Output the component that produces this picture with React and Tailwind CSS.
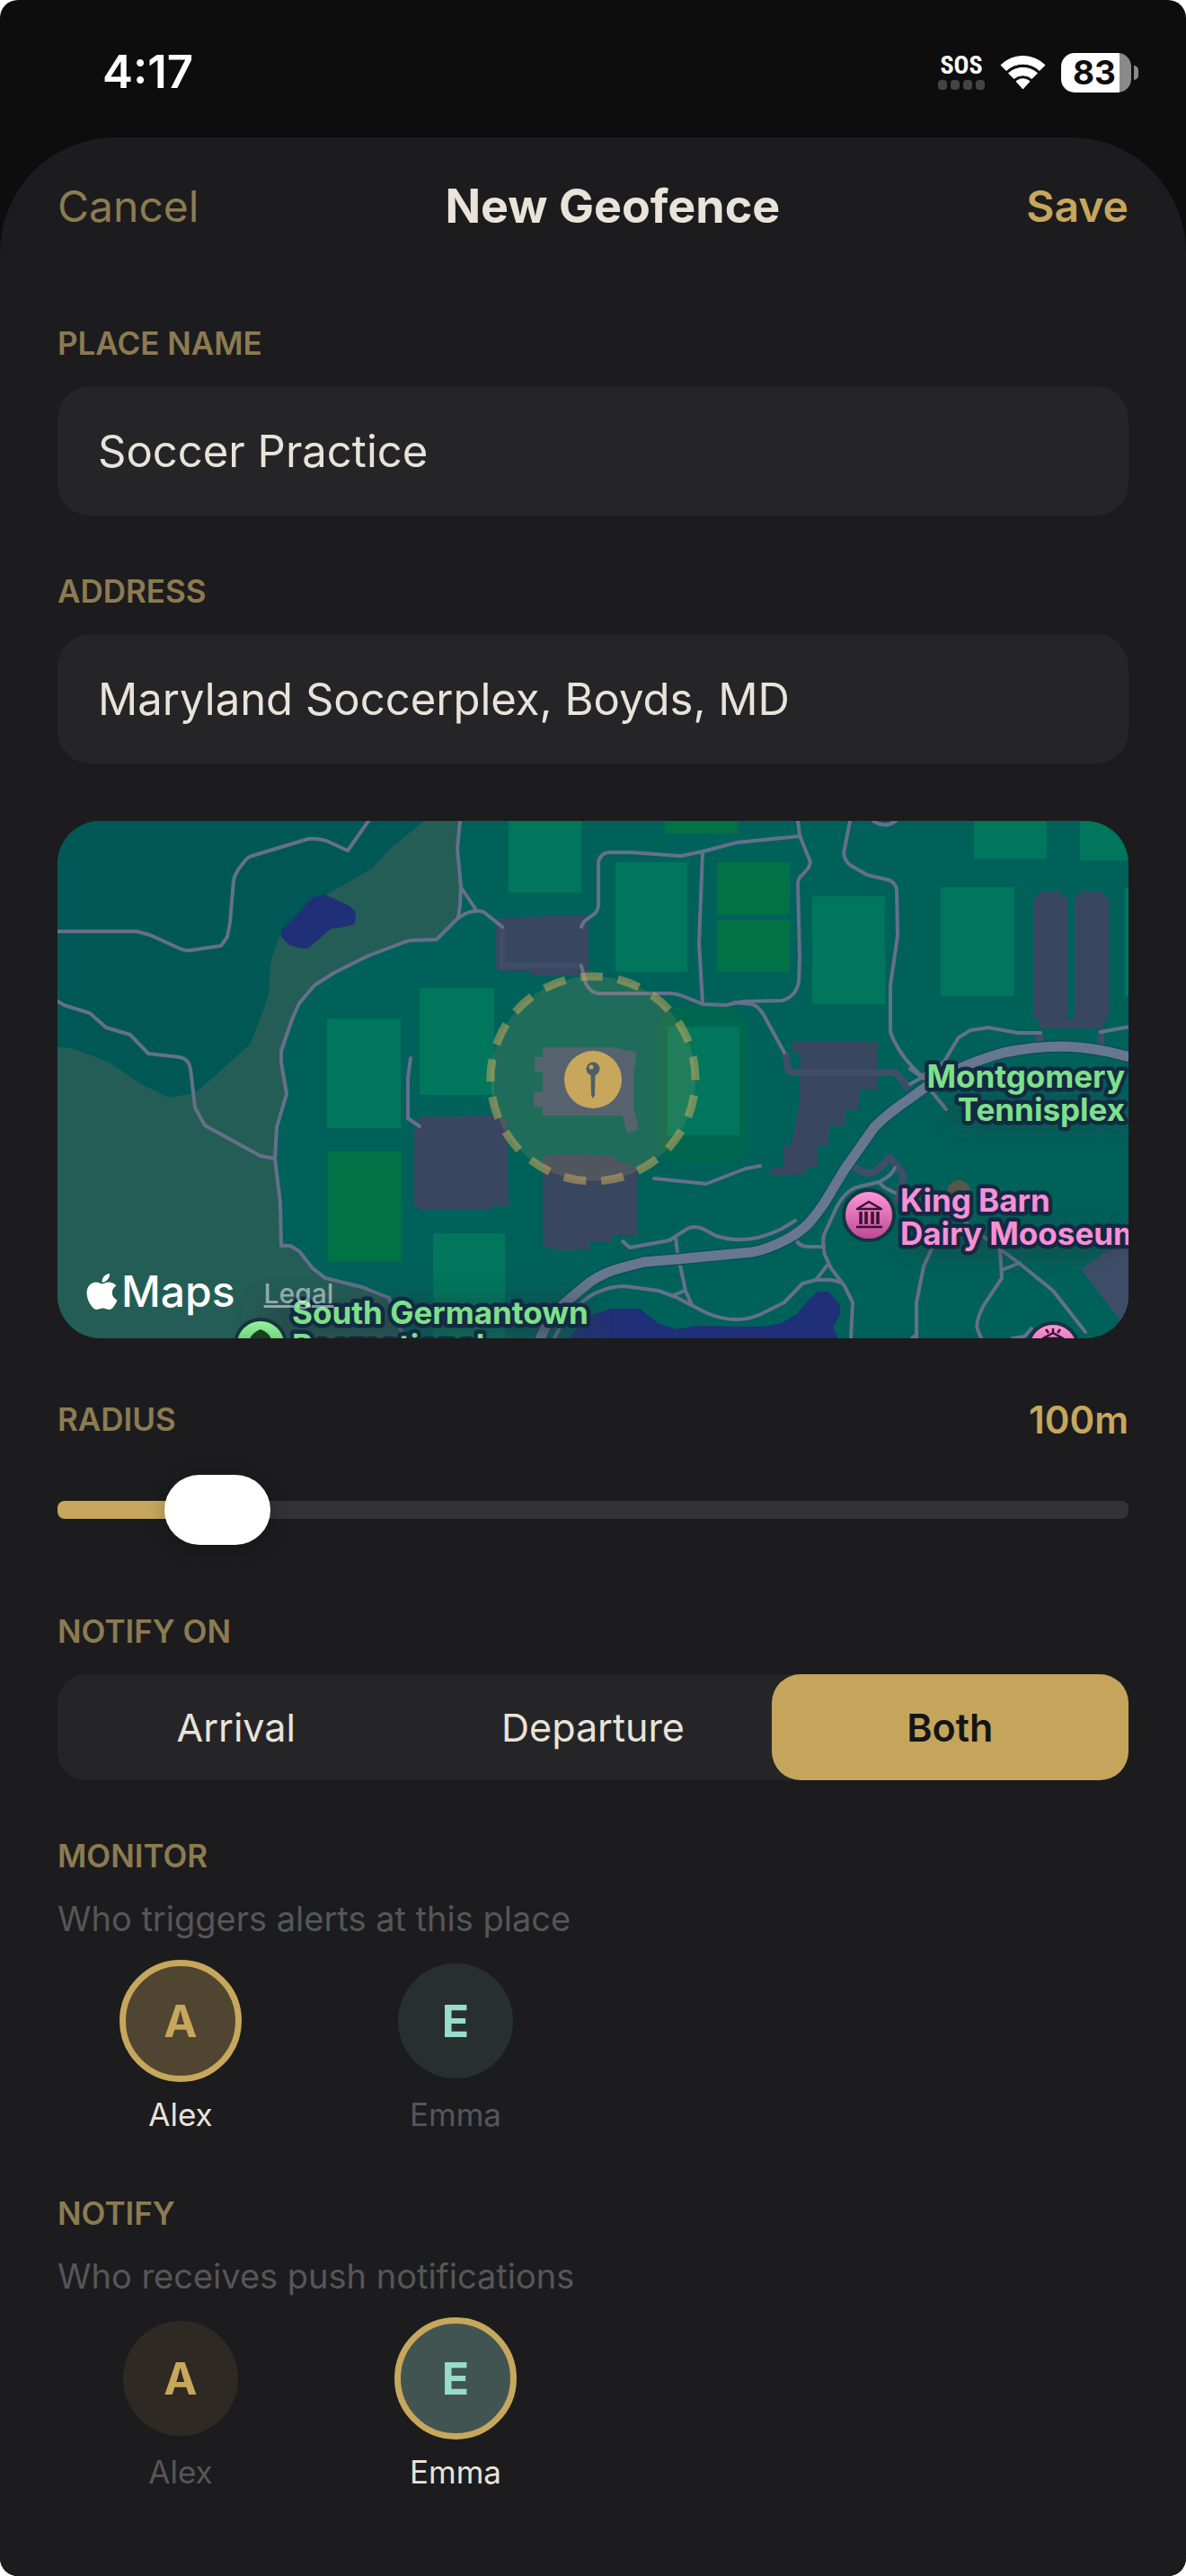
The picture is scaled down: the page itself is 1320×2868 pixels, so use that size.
import React, { useState } from 'react';
import { FaApple } from 'react-icons/fa';

const NOTIFY_OPTIONS = ['Arrival', 'Departure', 'Both'];

const MEMBERS = [
  { name: 'Alex', text: 'text-[#c7a75c]', on: 'bg-[#4f4530]', off: 'bg-[#2e2a23]' },
  { name: 'Emma', text: 'text-[#98dccb]', on: 'bg-[#425452]', off: 'bg-[#28302f]' },
];

const MIN_RADIUS = 50;
const MAX_RADIUS = 500;

// thin footpaths
const PATHS = [
  'M64 1037H152L167 1041 200 1056Q206 1059 212 1058L246 1053 253 1043 256 1027 260 980Q261 972 273 958 275 955 280 953L343 934Q352 933 363 936L387 947 410 914',
  'M63 1114L71 1119 100 1128 118 1144 145 1152 165 1173 200 1177Q210 1179 212 1190L217 1233 228 1253 290 1287 306 1290',
  'M512 914L509 945 513 988 512 1007 510 1022 486 1046 457 1047Q448 1049 442 1052L410 1064 372 1083 350 1097 333 1117 325 1135 313 1170V1183L319 1218 308 1255 306 1290 312 1340 313 1387H323L333 1393 348 1412 362 1423 403 1433 433 1445 447 1483V1490',
  'M513 988L530 1013M510 1022Q524 1012 538 1015L559 1032',
  'M647 1032L650 1026 662 1017Q667 1013 666 1000V960Q668 949 680 949H702L758 953 782 948 820 938 890 931',
  'M782 948L778 1050 782 1118',
  'M647 1075L652 1095Q658 1106 666 1106H747Q755 1106 782 1118L808 1119 827 1115 870 1114Q886 1110 889 1093L890 1067 888 983Q889 976 893 974L900 966 902 960 890 930 888 914',
  'M817 1116L837 1118Q844 1120 850 1130L873 1172',
  'M946 914L939 950Q940 958 946 963L965 974 990 980Q998 984 998 992L999 1042 991 1097V1148Q993 1158 1007 1178 1016 1189 1026 1198',
  'M972 914Q986 923 997 914',
  'M1026 1198L1050 1183 1067 1155 1080 1147 1100 1144 1133 1150H1158M1225 1149L1257 1143',
  'M457 1178L454 1200V1245L467 1254',
  'M728 1312L786 1318 830 1301 846 1298',
  'M693 1382L701 1389 745 1381 765 1368Q773 1364 782 1368L797 1376Q820 1383 843 1378 858 1374 870 1368L885 1359',
  'M752 1378L754 1395 763 1437 770 1453M750 1442L762 1437',
  'M617 1490L628 1468 650 1448Q660 1440 667 1438 680 1432 695 1432L733 1437 752 1444 787 1462Q803 1469 820 1469 834 1469 847 1463L873 1450 893 1429 908 1425H925L937 1428',
  'M922 1407L908 1425',
  'M996 1300Q992 1310 978 1316L953 1322Q943 1326 936 1336 930 1345 927 1353L917 1375Q915 1385 918 1397L925 1412 940 1432 949 1450 947 1490',
  'M978 1316L984 1322 996 1328M886 1380Q889 1388 900 1388H917',
  'M1037 1390L1028 1410 1020 1450V1490M1020 1486L1015 1490',
  'M1073 1360L1096 1378 1135 1407 1172 1437 1208 1483M1115 1414L1135 1406',
  'M1113 1390L1115 1423 1095 1453Q1085 1472 1088 1480L1092 1490',
  'M1127 1490L1140 1488 1148 1479',
  'M1013 1190L1030 1202M1013 1207L1030 1197M1035 1213L1053 1235',
];

const MAIN_ROAD = 'M600 1494Q608 1470 627 1452L657 1427Q674 1416 690 1412L717 1405 753 1402 837 1394Q855 1391 877 1379 890 1372 900 1362 909 1352 917 1340L940 1302 973 1255Q988 1240 1007 1227L1035 1207Q1070 1185 1117 1172 1150 1165 1183 1165 1220 1166 1258 1177';

// light pitches: x, y, width, height
const FIELDS = [
  [364, 1134, 82, 122],
  [467, 1100, 83, 119],
  [566, 914, 81, 80],
  [685, 960, 80, 122],
  [743, 1143, 80, 121],
  [904, 998, 81, 120],
  [1047, 988, 82, 121],
  [1084, 914, 81, 42],
  [1202, 914, 54, 44],
  [1252, 989, 6, 120],
  [482, 1373, 80, 117],
];

const GREENS = [
  [740, 914, 81, 14],
  [798, 960, 81, 58],
  [798, 1024, 81, 58],
  [365, 1282, 82, 122],
];

const LABELS = [
  { x: 1252, y: 1211, anchor: 'end', fill: '#7ee08a', lines: ['Montgomery', 'Tennisplex'] },
  { x: 1002, y: 1349, anchor: 'start', fill: '#f98fd6', lines: ['King Barn', 'Dairy Mooseum'] },
  { x: 325, y: 1474, anchor: 'start', fill: '#7ee08a', lines: ['South Germantown', 'Recreational'] },
];

function StatusBar() {
  return (
    <div className="flex h-[153px] items-center justify-between pt-2 pr-[53px] pl-[114px]">
      <span className="text-[51px] font-semibold text-white">4:17</span>
      <div className="flex items-center gap-[17px]">
        <div className="flex flex-col items-center gap-1">
          <span className="font-['Liberation_Sans_Narrow','Roboto_Condensed','DejaVu_Sans_Condensed',sans-serif] text-[28px] leading-6 font-bold text-white">SOS</span>
          <div className="flex gap-1">
            {[0, 1, 2, 3].map(i => <span key={i} className="h-[11px] w-[10px] rounded-sm bg-[#444446]"/>)}
          </div>
        </div>
        <svg viewBox="0 0 51 40" className="h-10 w-[51px]" fill="#fff" stroke="#fff" strokeWidth="1" strokeLinejoin="round">
          <path d="M1 11.5A35 35 0 0 1 50 11.5L44 17.5A27 27 0 0 0 7 17.5Z"/>
          <path d="M9.500 20.500A24 24 0 0 1 41.500 20.500L35.500 26.500A15.500 15.500 0 0 0 15.500 26.500Z"/>
          <path d="M18 29.500A11.500 11.500 0 0 1 33 29.500L25.500 38Z"/>
        </svg>
        <div className="flex items-center gap-[3px]">
          <div className="flex h-11 w-[78px] items-center justify-center rounded-[15px] bg-linear-to-r from-white from-83% to-[#8a8a8b] to-83% pr-1">
            <span className="text-[37px] font-bold text-[#0d0d0d]">83</span>
          </div>
          <span className="h-4 w-[5px] rounded-r-full bg-[#8a8a8b]"/>
        </div>
      </div>
    </div>
  );
}

function MapDrawing() {
  return (
    <svg viewBox="64 914 1192 576" preserveAspectRatio="xMidYMid slice" className="block h-full w-full" fontFamily="Inter, sans-serif">
      <defs>
        <linearGradient id="pink" x1="0" y1="0" x2="0" y2="1">
          <stop offset="0" stopColor="#ff97dc"/>
          <stop offset="1" stopColor="#bb4792"/>
        </linearGradient>
        <linearGradient id="green" x1="0" y1="0" x2="0" y2="1">
          <stop offset="0" stopColor="#96f79e"/>
          <stop offset="1" stopColor="#3f9a4d"/>
        </linearGradient>
        <filter id="soft" x="-20%" y="-60%" width="140%" height="220%">
          <feGaussianBlur stdDeviation="14"/>
        </filter>
      </defs>

      {/* Land and water */}
      <rect x="64" y="914" width="1192" height="576" fill="#00615a"/>
      <path fill="#245d55" d="M64 914H512L509 945 513 988 512 1007 510 1022 486 1046 457 1047 442 1052 410 1064 372 1083 350 1097 333 1117 325 1135 313 1170V1183L319 1218 308 1255 306 1290 312 1340 313 1387H323L333 1393 348 1412 362 1423 403 1433 433 1445 447 1483V1490H64Z"/>
      <path fill="#005856" d="M64 914H472L450 932 437 942 415 966 395 978 363 996 330 1020 309 1046 301 1072 299 1107 287 1141 278 1163 262 1177 237 1200 217 1217 188 1222 157 1207 120 1182 82 1168 64 1165Z"/>
      <path fill="#1f3078" d="M313 1043V1035L327 1022 348 999 362 996 388 1008 396 1015 395 1029 378 1033 368 1034 343 1056H335L322 1052Z"/>
      <path fill="#1f3078" d="M633 1490L647 1473 660 1463 680 1457H712L732 1473 752 1480 775 1476 823 1477 850 1477 870 1473 887 1463 900 1447 910 1438H922L935 1453V1463L927 1478 932 1487V1490Z"/>

      {/* Pitches */}
      <rect x="732" y="1120" width="100" height="176" rx="30" fill="#00664e"/>
      {FIELDS.map(([x, y, w, h]) => <rect key={`${x}-${y}`} x={x} y={y} width={w} height={h} fill="#00765c"/>)}
      {GREENS.map(([x, y, w, h]) => <rect key={`${x}-${y}`} x={x} y={y} width={w} height={h} fill="#007246"/>)}

      {/* Parking lots */}
      <g fill="#38475f">
        <path d="M551 1023L605 1020H655V1083L640 1086H593L590 1081H557L551 1077Z"/>
        <path d="M461 1253L467 1243 513 1243 542 1241 564 1247 566 1342H548V1347H467L461 1342Z"/>
        <path d="M604 1287L631 1285 680 1287 690 1293 703 1297 709 1303V1375H681V1382H656V1391L640 1392H622L604 1387Z"/>
        <path d="M1150 998H1156V993H1182V998H1188V1134H1196V998H1202V993H1228V998H1234V1128L1228 1143V1145H1156V1134H1150Z"/>
        <path d="M882 1160H976V1213H957L955 1235H941L940 1253H923L922 1275H910V1299H898V1307L858 1309V1299H872V1276H880L889 1235 891 1172H882Z"/>
        <path fill="#3f4e68" d="M1203 1413L1233 1392 1257 1385V1480L1247 1470Z"/>
      </g>
      <g fill="none" stroke="#3e4e68" strokeWidth="8" strokeLinejoin="round">
        <path strokeWidth="7" d="M559 1033V1075H647"/>
        <path d="M874 1172L877 1190Q878 1194 883 1194H993Q998 1194 1002 1200L1012 1213"/>
        <path d="M950 1298Q958 1306 966 1306 974 1306 980 1299L991 1289 1003 1304Q1007 1309 1004 1316L998 1338"/>
        <path d="M1157 1148V1163M1225 1148V1163"/>
      </g>
      <circle cx="1067" cy="1327" r="13" fill="#55574a"/>

      {/* Roads */}
      <g fill="none" stroke="#65708a" strokeWidth="4" strokeLinejoin="round" strokeLinecap="round">
        {PATHS.map(d => <path key={d} d={d}/>)}
      </g>
      <path d={MAIN_ROAD} fill="none" stroke="#0b5058" strokeWidth="14"/>
      <path d={MAIN_ROAD} fill="none" stroke="#67778f" strokeWidth="11"/>

      {/* Geofence */}
      <circle cx="660" cy="1201" r="114" fill="#c7a75c" fillOpacity=".16"/>
      <path fill="#56636f" d="M604 1166H683L690 1168 707 1171 708 1177 705 1195V1233L711 1257 698 1262 693 1242H604V1232H594V1216H604V1193H595V1177H604Z"/>
      <path d="M774 1201A114 114 0 0 0 546 1201A114 114 0 0 0 774 1201" fill="none" stroke="#c7a75c" strokeOpacity=".55" strokeWidth="9" strokeDasharray="25 17"/>
      <circle cx="660" cy="1202" r="32" fill="#c7a75c"/>
      <circle cx="660" cy="1190" r="7.500" fill="#4f5d69"/>
      <path d="M657.500 1195H662.500L662 1219 660 1223 658 1219Z" fill="#4f5d69"/>
      <circle cx="658" cy="1188" r="2.500" fill="#c7a75c"/>

      {/* Places */}
      <g filter="url(#soft)" fill="#2b3c42" fillOpacity=".55">
        <rect x="1060" y="1225" width="190" height="26"/>
        <rect x="1010" y="1370" width="240" height="24"/>
        <rect x="290" y="1450" width="370" height="40"/>
      </g>
      <g stroke="#14343f" strokeWidth="4">
        <circle cx="967" cy="1353" r="28" fill="url(#pink)"/>
        <circle cx="1172" cy="1501" r="28" fill="url(#pink)"/>
        <circle cx="290" cy="1497" r="28" fill="url(#green)"/>
      </g>
      <g stroke="#3a1230" strokeWidth="2.500" fill="none" strokeLinejoin="round">
        <path d="M954 1346L967 1338 981 1346Z"/>
        <path strokeWidth="3.500" d="M958 1349V1363M964 1349V1363M971 1349V1363M977 1349V1363"/>
        <path d="M953 1366H982"/>
        <path d="M1161 1490L1172 1484 1183 1490ZM1172 1484V1479M1164 1480L1167 1484M1180 1480L1177 1484"/>
      </g>
      <path d="M278 1491Q280 1484 290 1480 300 1484 302 1491Z" fill="#1d3d22"/>
      {LABELS.map(({ x, y, anchor, fill, lines }) => (
        <text key={lines[0]} fontSize="35" fontWeight="700" textAnchor={anchor} fill={fill} stroke="#132a42" strokeWidth="9" strokeLinejoin="round" paintOrder="stroke">
          {lines.map((line, i) => <tspan key={line} x={x} y={y + i * 37}>{line}</tspan>)}
        </text>
      ))}
    </svg>
  );
}

function Heading({ htmlFor, children }) {
  const Tag = htmlFor ? 'label' : 'h2';
  return (
    <Tag htmlFor={htmlFor} className="block text-[35px] leading-10 font-semibold text-[#8c7b51]">
      {children}
    </Tag>
  );
}

function TextField({ id, label, value, onChange }) {
  return (
    <div>
      <Heading htmlFor={id}>{label}</Heading>
      <input id={id} type="text" value={value} onChange={e => onChange(e.target.value)}
        className="mt-7 block h-36 w-full rounded-[36px] bg-[#252527] px-[45px] text-[49px] text-[#e9e3d9] focus:outline-none"/>
    </div>
  );
}

function MemberPicker({ title, hint, selected, onToggle }) {
  return (
    <section className="pb-[6px]">
      <Heading>{title}</Heading>
      <p className="mt-[26px] text-[38px] leading-12 text-[#565658]">{hint}</p>
      <div className="mt-[26px] grid grid-cols-4 gap-8">
        {MEMBERS.map(m => {
          const active = selected.includes(m.name);
          return (
            <button key={m.name} type="button" aria-pressed={active} onClick={() => onToggle(m.name)}
              className="flex flex-col items-center gap-5">
              <span className={`flex size-32 items-center justify-center rounded-full text-[50px] font-bold ${m.text} ${
                active ? `${m.on} outline-[7px] -outline-offset-3 outline-[#c7a75c]` : m.off
              }`}>
                {m.name[0]}
              </span>
              <span className={`text-[35px] leading-10 ${active ? 'text-[#e9e3d9]' : 'text-[#565658]'}`}>{m.name}</span>
            </button>
          );
        })}
      </div>
    </section>
  );
}

const toggle = (list, name) => (list.includes(name) ? list.filter(n => n !== name) : [...list, name]);

export default function App() {
  const [name, setName] = useState('Soccer Practice');
  const [address, setAddress] = useState('Maryland Soccerplex, Boyds, MD');
  const [radius, setRadius] = useState(100);
  const [notifyOn, setNotifyOn] = useState('Both');
  const [monitor, setMonitor] = useState(['Alex']);
  const [notify, setNotify] = useState(['Emma']);

  const fill = ((radius - MIN_RADIUS) / (MAX_RADIUS - MIN_RADIUS)) * 100;

  return (
    <div className="bg-white">
      <div className="flex min-h-screen flex-col overflow-hidden rounded-[20px] bg-[#0d0d0d] font-['Inter',sans-serif]">
        <StatusBar/>

        <main className="flex-1 rounded-t-[128px] bg-[#1c1c1e] px-16 pt-13 pb-16">
          <header className="flex h-[50px] items-center justify-between text-[48px]">
            <button type="button" className="text-[#8c7b51]">Cancel</button>
            <h1 className="text-[52px] font-bold text-[#e9e3d9]">New Geofence</h1>
            <button type="button" className="font-semibold text-[#c7a75c]">Save</button>
          </header>

          <form className="mt-[107px] flex flex-col gap-16" onSubmit={e => e.preventDefault()}>
            <TextField id="place" label="PLACE NAME" value={name} onChange={setName}/>
            <TextField id="address" label="ADDRESS" value={address} onChange={setAddress}/>

            {/* Map */}
            <div className="relative h-[576px] overflow-hidden rounded-[48px]">
              <MapDrawing/>
              <div className="absolute bottom-5 left-8 flex items-center gap-8">
                <span className="flex items-center gap-1 text-[48px] leading-16 font-medium text-white">
                  <FaApple className="h-[46px] w-[35px]"/>Maps
                </span>
                <a href="#legal" className="pt-1 text-[30px] font-medium text-white/50 underline">Legal</a>
              </div>
            </div>

            {/* Radius */}
            <div>
              <div className="flex h-13 items-center justify-between">
                <Heading htmlFor="radius">RADIUS</Heading>
                <output htmlFor="radius" className="text-[42px] font-semibold text-[#c7a75c]">{radius}m</output>
              </div>
              <input id="radius" type="range" min={MIN_RADIUS} max={MAX_RADIUS} step={10} value={radius}
                onChange={e => setRadius(Number(e.target.value))}
                style={{ '--fill': `${fill}%` }}
                className="mt-9 mb-3 block h-[78px] w-full cursor-pointer appearance-none bg-transparent focus:outline-none [&::-webkit-slider-runnable-track]:h-5 [&::-webkit-slider-runnable-track]:rounded-lg [&::-webkit-slider-runnable-track]:bg-[linear-gradient(to_right,#c7a75c_var(--fill),#333335_var(--fill))] [&::-webkit-slider-thumb]:-mt-[29px] [&::-webkit-slider-thumb]:h-[78px] [&::-webkit-slider-thumb]:w-[118px] [&::-webkit-slider-thumb]:appearance-none [&::-webkit-slider-thumb]:rounded-full [&::-webkit-slider-thumb]:bg-white [&::-webkit-slider-thumb]:shadow-[0_4px_20px_rgba(0,0,0,0.25)]"/>
            </div>

            {/* Notify on */}
            <div>
              <Heading>NOTIFY ON</Heading>
              <div className="mt-7 grid h-[118px] grid-cols-3 rounded-[32px] bg-[#252527] text-[43px]">
                {NOTIFY_OPTIONS.map(option => (
                  <button key={option} type="button" aria-pressed={notifyOn === option} onClick={() => setNotifyOn(option)}
                    className={`rounded-[32px] ${
                      notifyOn === option ? 'bg-[#c4a55b] font-semibold text-[#151517]' : 'text-[#e9e3d9]'
                    }`}>
                    {option}
                  </button>
                ))}
              </div>
            </div>

            <MemberPicker title="MONITOR" hint="Who triggers alerts at this place" selected={monitor}
              onToggle={n => setMonitor(toggle(monitor, n))}/>
            <MemberPicker title="NOTIFY" hint="Who receives push notifications" selected={notify}
              onToggle={n => setNotify(toggle(notify, n))}/>
          </form>
        </main>
      </div>
    </div>
  );
}
